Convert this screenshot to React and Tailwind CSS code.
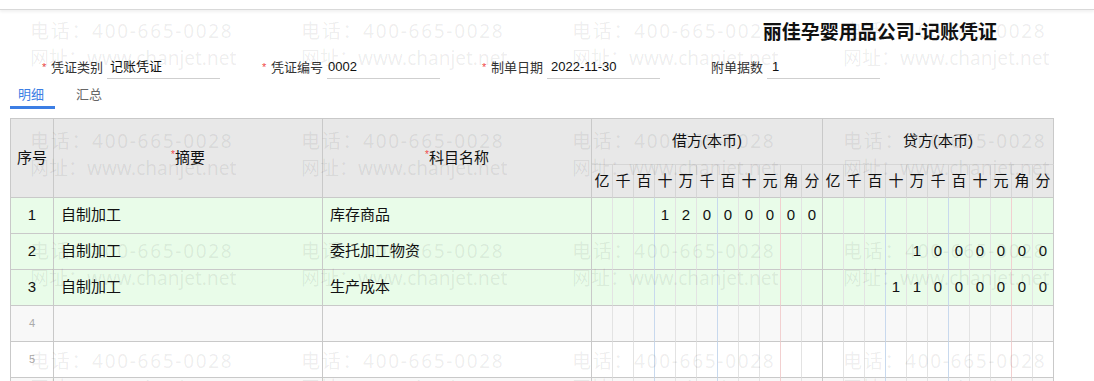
const FONT = "font-['Liberation_Sans','Noto_Sans_CJK_SC',sans-serif]";

const units = ["亿", "千", "百", "十", "万", "千", "百", "十", "元", "角", "分"];

// right border colour for each digit cell in body rows
const bodyBorders = [
  "border-r-[#e3e3e3]",
  "border-r-[#e3e3e3]",
  "border-r-[#c8d9ee]",
  "border-r-[#e3e3e3]",
  "border-r-[#e3e3e3]",
  "border-r-[#c8d9ee]",
  "border-r-[#e3e3e3]",
  "border-r-[#e3e3e3]",
  "border-r-[#f2d0d0]",
  "border-r-[#e3e3e3]",
  "border-r-[#c9c9c9]",
];

const blank = ["", "", "", "", "", "", "", "", "", "", ""];

const rows = [
  {
    no: "1",
    summary: "自制加工",
    account: "库存商品",
    debit: ["", "", "", "1", "2", "0", "0", "0", "0", "0", "0"],
    credit: blank,
  },
  {
    no: "2",
    summary: "自制加工",
    account: "委托加工物资",
    debit: blank,
    credit: ["", "", "", "", "1", "0", "0", "0", "0", "0", "0"],
  },
  {
    no: "3",
    summary: "自制加工",
    account: "生产成本",
    debit: blank,
    credit: ["", "", "", "1", "1", "0", "0", "0", "0", "0", "0"],
  },
  { no: "4", empty: true, bg: "bg-[#f8f8f8]" },
  { no: "5", empty: true, bg: "bg-white" },
  { no: "6", empty: true, bg: "bg-[#f8f8f8]" },
];

function FormItem({ label, value, required, valueClass }) {
  return (
    <div className="flex items-center w-[220px] h-[23px]">
      <span className={"w-[11px] pl-[2px] text-[11px] text-[#f04848] " + (required ? "" : "invisible")}>*</span>
      <span className="w-[56px] text-[13px] text-[#333]">{label}</span>
      <div className={"w-[113px] h-[23px] flex items-center border-b border-[#cfcfcf] text-[13px] text-[#111] " + valueClass}>
        {value}
      </div>
    </div>
  );
}

function Watermark() {
  const cells = Array.from({ length: 16 });
  return (
    <div className="absolute inset-0 pointer-events-none overflow-hidden pl-[30px] pt-[18px] grid grid-cols-[repeat(4,271px)] auto-rows-[110px] font-['Noto_Sans','Noto_Sans_CJK_SC',sans-serif] text-[19px] leading-[27px] text-black/[0.075]">
      {cells.map((_, i) => (
        <div key={i} className="whitespace-nowrap">
          <div className="tracking-[1.7px]">电话：400-665-0028</div>
          <div>网址：www.chanjet.net</div>
        </div>
      ))}
    </div>
  );
}

export default function App() {
  return (
    <div className={"relative w-[1094px] h-[381px] overflow-hidden bg-white " + FONT}>
      {/* top bar edge */}
      <div className="h-[10px] border-b border-[#d9d9d9] shadow-[0_2px_3px_rgba(0,0,0,0.06)]" />

      {/* title */}
      <div className="h-[46px] flex items-center justify-end pr-[97px]">
        <h1 className="text-[19px] font-bold text-[#111]">丽佳孕婴用品公司-记账凭证</h1>
      </div>

      {/* voucher fields */}
      <div className="flex pl-[40px]">
        <FormItem required label="凭证类别" value="记账凭证" valueClass="pl-[3px]" />
        <FormItem required label="凭证编号" value="0002" valueClass="pl-[1px]" />
        <FormItem required label="制单日期" value="2022-11-30" valueClass="pl-[4px]" />
        <FormItem label="附单据数" value="1" valueClass="pl-[5px]" />
      </div>

      {/* tabs */}
      <div className="flex gap-[13px] pl-[10px] h-[30px]">
        <div className="w-[45px] pl-[8px] pt-[5px] border-b-[3px] border-[#3c7ee4] text-[13px] text-[#3c7ee4] flex items-center">明细</div>
        <div className="w-[45px] pl-[8px] pt-[5px] border-b-[3px] border-transparent text-[13px] text-[#666] flex items-center">汇总</div>
      </div>

      {/* voucher table */}
      <table className="ml-[10px] mt-[9px] table-fixed border-separate border-spacing-0 w-[1043px] text-[#111]">
        <colgroup>
          <col className="w-[44px]" />
          <col className="w-[269px]" />
          <col className="w-[269px]" />
          {units.map((_, i) => (
            <col key={"d" + i} className="w-[21px]" />
          ))}
          {units.map((_, i) => (
            <col key={"c" + i} className="w-[21px]" />
          ))}
        </colgroup>
        <thead className="bg-[#e8e8e8]">
          <tr className="h-[47px]">
            <th rowSpan={2} className="border border-[#c9c9c9] font-normal text-[15px]">序号</th>
            <th rowSpan={2} className="border-t border-r border-b border-[#c9c9c9] font-normal text-[15px]">
              <span className="text-[10px] text-[#f04848] align-top">*</span>摘要
            </th>
            <th rowSpan={2} className="border-t border-r border-b border-[#c9c9c9] font-normal text-[15px]">
              <span className="text-[10px] text-[#f04848] align-top">*</span>科目名称
            </th>
            <th colSpan={11} className="border-t border-r border-b border-[#c9c9c9] border-b-[#d6d6d6] font-normal text-[15px]">借方(本币)</th>
            <th colSpan={11} className="border-t border-r border-b border-[#c9c9c9] border-b-[#d6d6d6] font-normal text-[15px]">贷方(本币)</th>
          </tr>
          <tr className="h-[33px]">
            {[...units, ...units].map((u, i) => (
              <th
                key={i}
                className={
                  "border-r border-b border-b-[#c9c9c9] font-normal text-[15px] p-0 " +
                  (i === 10 || i === 21 ? "border-r-[#c9c9c9]" : "border-r-[#d6d6d6]")
                }
              >
                {u}
              </th>
            ))}
          </tr>
        </thead>
        <tbody>
          {rows.map((r) => (
            <tr key={r.no} className={"h-[36px] " + (r.empty ? r.bg : "bg-[#e9fce9]")}>
              <td
                className={
                  "border-l border-r border-b border-[#c9c9c9] text-center " +
                  (r.empty ? "text-[11px] text-[#aaa]" : "text-[15px]")
                }
              >
                {r.no}
              </td>
              <td className="border-r border-b border-[#c9c9c9] pl-[7px] text-[15px]">{r.summary}</td>
              <td className="border-r border-b border-[#c9c9c9] pl-[7px] text-[15px]">{r.account}</td>
              {[...(r.debit || blank), ...(r.credit || blank)].map((d, i) => (
                <td
                  key={i}
                  className={"border-r border-b border-b-[#c9c9c9] text-center text-[15px] p-0 " + bodyBorders[i % 11]}
                >
                  {d}
                </td>
              ))}
            </tr>
          ))}
        </tbody>
      </table>

      <Watermark />
    </div>
  );
}
